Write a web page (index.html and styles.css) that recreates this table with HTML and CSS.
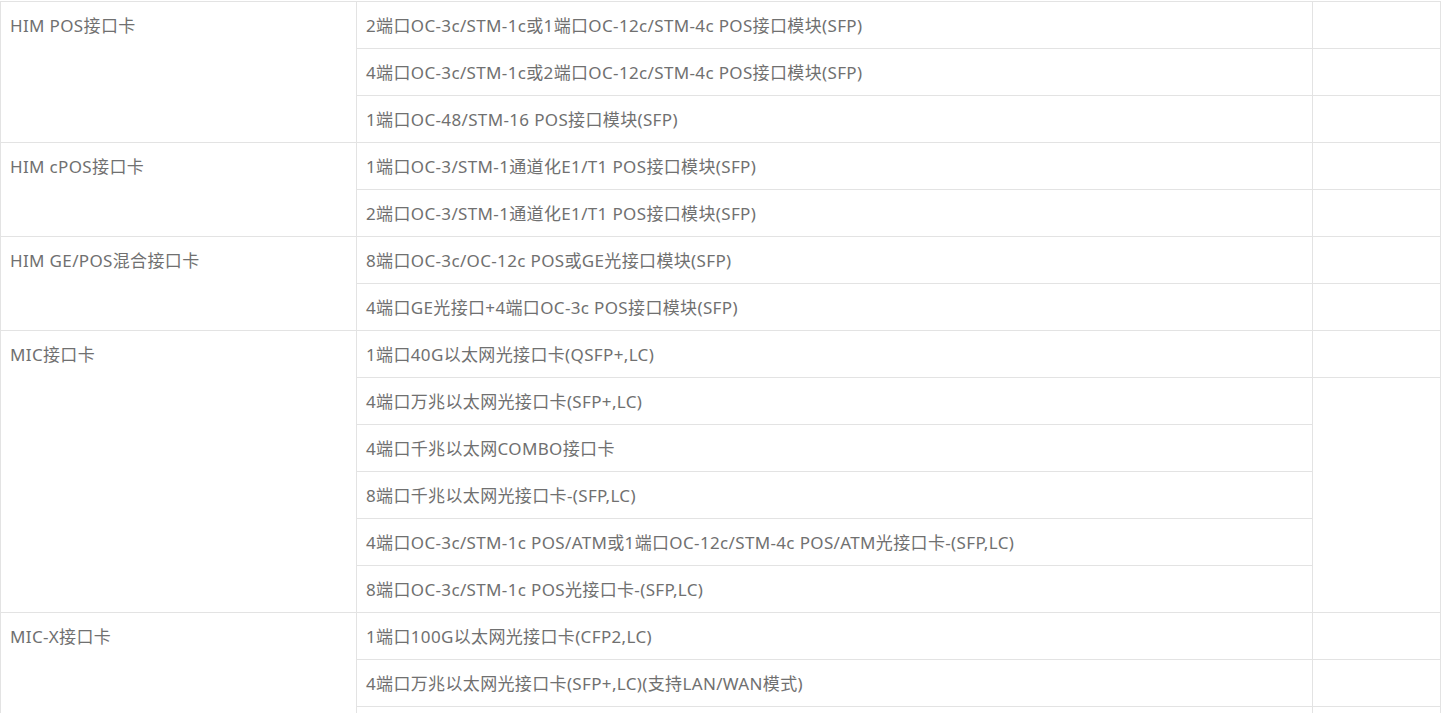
FILE: index.html
```html
<!DOCTYPE html>
<html lang="zh-CN">
<head>
<meta charset="utf-8">
<title>接口卡</title>
<link rel="stylesheet" href="styles.css">
</head>
<body>
<table class="spec">
<colgroup><col class="c1"><col class="c2"><col class="c3"></colgroup>
<tbody>
<tr><td rowspan="3">HIM POS接口卡</td><td>2端口OC-3c/STM-1c或1端口OC-12c/STM-4c POS接口模块(SFP)</td><td></td></tr>
<tr><td>4端口OC-3c/STM-1c或2端口OC-12c/STM-4c POS接口模块(SFP)</td><td></td></tr>
<tr><td>1端口OC-48/STM-16 POS接口模块(SFP)</td><td></td></tr>
<tr><td rowspan="2">HIM cPOS接口卡</td><td>1端口OC-3/STM-1通道化E1/T1 POS接口模块(SFP)</td><td></td></tr>
<tr><td>2端口OC-3/STM-1通道化E1/T1 POS接口模块(SFP)</td><td></td></tr>
<tr><td rowspan="2">HIM GE/POS混合接口卡</td><td>8端口OC-3c/OC-12c POS或GE光接口模块(SFP)</td><td></td></tr>
<tr><td>4端口GE光接口+4端口OC-3c POS接口模块(SFP)</td><td></td></tr>
<tr><td rowspan="6">MIC接口卡</td><td>1端口40G以太网光接口卡(QSFP+,LC)</td><td></td></tr>
<tr><td>4端口万兆以太网光接口卡(SFP+,LC)</td><td rowspan="5"></td></tr>
<tr><td>4端口千兆以太网COMBO接口卡</td></tr>
<tr><td>8端口千兆以太网光接口卡-(SFP,LC)</td></tr>
<tr><td>4端口OC-3c/STM-1c POS/ATM或1端口OC-12c/STM-4c POS/ATM光接口卡-(SFP,LC)</td></tr>
<tr><td>8端口OC-3c/STM-1c POS光接口卡-(SFP,LC)</td></tr>
<tr><td rowspan="3">MIC-X接口卡</td><td>1端口100G以太网光接口卡(CFP2,LC)</td><td></td></tr>
<tr><td>4端口万兆以太网光接口卡(SFP+,LC)(支持LAN/WAN模式)</td><td></td></tr>
<tr><td></td><td></td></tr>
</tbody>
</table>
</body>
</html>
```
FILE: styles.css
```css
html, body {
  margin: 0;
  padding: 0;
  background: #fff;
}
body {
  padding-top: 1px;
  font-family: "Noto Sans", "Noto Sans CJK SC", sans-serif;
  font-size: 17px;
  letter-spacing: 0.35px;
  color: #707070;
}
.spec {
  border-collapse: collapse;
  table-layout: fixed;
  width: 1440px;
}
.spec .c1 { width: 356px; }
.spec .c2 { width: 956px; }
.spec .c3 { width: 128px; }
.spec td {
  border: 1px solid #e3e3e3;
  padding: 12px 9px 10px;
  line-height: 24px;
  height: 24px;
  vertical-align: top;
  white-space: nowrap;
}
```
